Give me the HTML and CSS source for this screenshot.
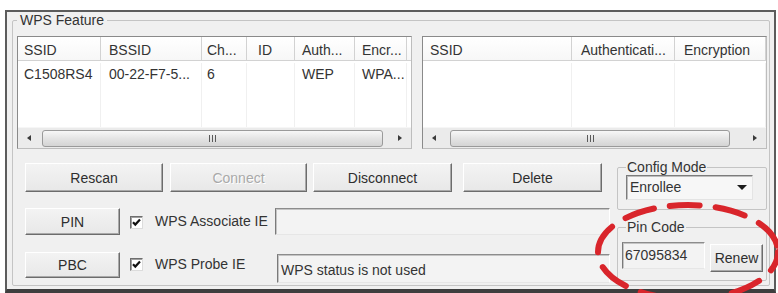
FILE: index.html
```html
<!DOCTYPE html>
<html>
<head>
<meta charset="utf-8">
<link rel="stylesheet" href="styles.css">
</head>
<body>
<div class="window">
  <fieldset class="group wps">
    <legend>WPS Feature</legend>
    <div class="lists">
      <div class="list list-left">
        <div class="lv-head">
          <div class="cell l1">SSID</div>
          <div class="cell l2">BSSID</div>
          <div class="cell l3">Ch...</div>
          <div class="cell l4">ID</div>
          <div class="cell l5">Auth...</div>
          <div class="cell l6">Encr...</div>
        </div>
        <div class="lv-body">
          <div class="lv-row">
            <div class="cell l1">C1508RS4</div>
            <div class="cell l2">00-22-F7-5...</div>
            <div class="cell l3">6</div>
            <div class="cell l4"></div>
            <div class="cell l5">WEP</div>
            <div class="cell l6">WPA...</div>
          </div>
          <div class="lv-row">
            <div class="cell l1"></div><div class="cell l2"></div><div class="cell l3"></div><div class="cell l4"></div><div class="cell l5"></div><div class="cell l6"></div>
          </div>
          <div class="lv-row">
            <div class="cell l1"></div><div class="cell l2"></div><div class="cell l3"></div><div class="cell l4"></div><div class="cell l5"></div><div class="cell l6"></div>
          </div>
        </div>
        <div class="hscroll">
          <div class="sb-btn"><span class="arrow-l"></span></div>
          <div class="thumb thumb-left"><span class="grip"></span></div>
          <div class="sb-space"></div>
          <div class="sb-btn"><span class="arrow-r"></span></div>
        </div>
      </div>
      <div class="list list-right">
        <div class="lv-head">
          <div class="cell r1">SSID</div>
          <div class="cell r2">Authenticati...</div>
          <div class="cell r3">Encryption</div>
        </div>
        <div class="lv-body">
          <div class="lv-row">
            <div class="cell r1"></div><div class="cell r2"></div><div class="cell r3"></div>
          </div>
          <div class="lv-row">
            <div class="cell r1"></div><div class="cell r2"></div><div class="cell r3"></div>
          </div>
          <div class="lv-row">
            <div class="cell r1"></div><div class="cell r2"></div><div class="cell r3"></div>
          </div>
        </div>
        <div class="hscroll">
          <div class="sb-btn"><span class="arrow-l"></span></div>
          <div class="thumb thumb-right"><span class="grip"></span></div>
          <div class="sb-space"></div>
          <div class="sb-btn"><span class="arrow-r"></span></div>
        </div>
      </div>
    </div>

    <div class="lower">
      <div class="controls">
        <div class="btn-row">
          <button class="btn b-rescan">Rescan</button>
          <button class="btn b-connect disabled">Connect</button>
          <button class="btn b-disconnect">Disconnect</button>
          <button class="btn b-delete">Delete</button>
        </div>
        <div class="opt-row pin-row">
          <button class="btn b-small b-pin">PIN</button>
          <span class="check"><svg viewBox="0 0 11 11" width="11" height="11"><path d="M2 5.2 L4.3 7.6 L9 2.6" fill="none" stroke="#111" stroke-width="2.2"/></svg></span>
          <span class="opt-label">WPS Associate IE</span>
          <div class="edit edit-assoc"></div>
        </div>
        <div class="opt-row pbc-row">
          <button class="btn b-small b-pbc">PBC</button>
          <span class="check"><svg viewBox="0 0 11 11" width="11" height="11"><path d="M2 5.2 L4.3 7.6 L9 2.6" fill="none" stroke="#111" stroke-width="2.2"/></svg></span>
          <span class="opt-label">WPS Probe IE</span>
          <div class="edit edit-status">WPS status is not used</div>
        </div>
      </div>
      <div class="side">
        <fieldset class="group config">
          <legend>Config Mode</legend>
          <div class="combo">
            <span class="combo-text">Enrollee</span>
            <span class="combo-btn"><span class="arrow-d"></span></span>
          </div>
        </fieldset>
        <fieldset class="group pincode">
          <legend>Pin Code</legend>
          <div class="pin-line">
            <div class="edit edit-pin">67095834</div>
            <button class="btn b-renew">Renew</button>
          </div>
        </fieldset>
      </div>
    </div>
  </fieldset>
</div>
<svg class="highlight" width="778" height="293" viewBox="0 0 778 293">
  <ellipse cx="688" cy="252" rx="90" ry="47" fill="none" stroke="#d9252b" stroke-width="6" stroke-dasharray="30 16" stroke-dashoffset="10" stroke-linecap="round"/>
</svg>
</body>
</html>
```
FILE: styles.css
```css
* { box-sizing: border-box; }
html, body { margin: 0; padding: 0; background: #fff; }
body {
  position: relative;
  width: 778px;
  height: 293px;
  overflow: hidden;
  font: 14px "Liberation Sans", Arial, sans-serif;
  color: #333;
}
.window {
  margin: 10px 0 0 5px;
  width: 771px;
  height: 283px;
  border: 2px solid #5c5c5c;
  border-bottom: 4px solid #3e3e3e;
  background: #f0f0f0;
}
.group {
  border: 1px solid #c4c4c4;
  border-radius: 2px;
  margin: 0;
  min-width: 0;
}
.group > legend {
  padding: 0 1px;
  line-height: 16px;
  font-size: 14px;
}
.wps {
  margin: 0 4px 0 5px;
  padding: 8px 2px 2px 4px;
}
.wps > legend { padding: 0 3px; }

/* list views */
.lists { display: flex; gap: 10px; height: 113px; }
.list {
  display: flex;
  flex-direction: column;
  background: #fff;
  border: 1px solid;
  border-color: #8a8a8a #bdbdbd #bdbdbd #8a8a8a;
  overflow: hidden;
}
.list-left { width: 395px; flex: none; }
.list-right { flex: 1; }
.lv-head {
  flex: none;
  display: flex;
  height: 24px;
  border-bottom: 1px solid #d2d2d2;
  background: linear-gradient(#ffffff, #f7f7f7);
}
.cell {
  flex: none;
  padding-left: 6px;
  white-space: nowrap;
  overflow: hidden;
}
.lv-head .cell {
  border-right: 1px solid #d2d2d2;
  line-height: 22px;
  padding-top: 2px;
}
.lv-body { flex: 1; padding-top: 2px; overflow: hidden; }
.lv-row { display: flex; height: 22px; line-height: 22px; }
.lv-body .cell { border-right: 1px solid #f0f0f0; }
.l1 { width: 83px; }
.l2 { width: 101px; padding-left: 8px; }
.l3 { width: 45px; padding-left: 5px; }
.l4 { width: 48px; padding-left: 11px; }
.l5 { width: 60px; padding-left: 7px; }
.l6 { width: 52px; padding-left: 7px; border-right: none; }
.lv-head .l6 { border-right: 1px solid #d2d2d2; }
.r1 { width: 149px; padding-left: 7px; }
.r2 { width: 103px; padding-left: 9px; }
.r3 { width: 91px; padding-left: 9px; }

/* scrollbars */
.hscroll {
  flex: none;
  height: 21px;
  display: flex;
  align-items: center;
  background: #ebebeb;
  border-top: 1px solid #f6f6f6;
}
.sb-btn {
  flex: none;
  width: 22px;
  height: 19px;
  display: flex;
  align-items: center;
  justify-content: center;
}
.sb-space { flex: 1; }
.arrow-l {
  width: 0; height: 0;
  border-top: 3px solid transparent;
  border-bottom: 3px solid transparent;
  border-right: 4px solid #3a3a3a;
}
.arrow-r {
  width: 0; height: 0;
  border-top: 3px solid transparent;
  border-bottom: 3px solid transparent;
  border-left: 4px solid #3a3a3a;
}
.thumb {
  flex: none;
  height: 17px;
  border: 1px solid #9a9a9a;
  border-radius: 3px;
  background: linear-gradient(#f7f7f7, #e4e4e4 50%, #d4d4d4);
  display: flex;
  align-items: center;
  justify-content: center;
}
.thumb-left { width: 341px; margin-left: 2px; }
.thumb-right { width: 280px; margin-left: 5px; }
.grip {
  width: 7px;
  height: 7px;
  background: repeating-linear-gradient(90deg, #5a5a5a 0 1px, transparent 1px 3px);
}

/* lower area */
.lower { display: flex; }
.controls { width: 593px; flex: none; }
.side { width: 150px; flex: none; margin-left: 7px; }

.btn {
  font: inherit;
  color: #2e2e2e;
  height: 29px;
  padding: 0;
  background: linear-gradient(#f3f3f3, #e8e8e8);
  border: 1px solid;
  border-color: #ffffff #6c6c6c #6c6c6c #ffffff;
  box-shadow: inset -1px -1px 0 #a9a9a9;
  border-radius: 0;
  display: flex;
  align-items: center;
  justify-content: center;
  flex: none;
}
.btn.disabled { color: #a9a9a9; text-shadow: 1px 1px 0 #fff; }
.btn-row { display: flex; margin-top: 14px; padding-left: 8px; }
.b-rescan { width: 138px; }
.b-connect { width: 137px; margin-left: 7px; }
.b-disconnect { width: 139px; margin-left: 6px; }
.b-delete { width: 139px; margin-left: 11px; }

.opt-row { display: flex; align-items: flex-start; padding-left: 8px; }
.pin-row { margin-top: 16px; }
.pbc-row { margin-top: 17px; }
.b-small { width: 95px; height: 27px; }
.b-pbc { height: 26px; }
.check {
  flex: none;
  width: 13px;
  height: 13px;
  margin-left: 10px;
  margin-top: 8px;
  background: #fff;
  border: 1px solid;
  border-color: #6e6e6e #dcdcdc #dcdcdc #6e6e6e;
  box-shadow: inset 1px 1px 0 #a0a0a0;
  display: flex;
  align-items: center;
  justify-content: center;
}
.check svg { display: block; }
.pbc-row .check { margin-top: 6px; }
.opt-label {
  flex: none;
  width: 120px;
  margin-left: 12px;
  line-height: 27px;
  white-space: nowrap;
}
.pbc-row .opt-label { line-height: 25px; }
.edit {
  background: #f3f3f3;
  border: 1px solid;
  border-color: #8c8c8c #ffffff #e6e6e6 #7a7a7a;
  box-shadow: inset 1px 1px 0 #c4c4c4;
  padding-left: 3px;
  white-space: nowrap;
}
.edit-assoc { flex: 1; height: 27px; }
.edit-status { flex: 1; height: 29px; margin-left: 2px; margin-top: 2px; line-height: 31px; }

/* side groups */
.config {
  margin-top: 10px;
  padding: 0 13px 9px 8px;
}
.combo {
  width: 127px;
  height: 25px;
  display: flex;
  align-items: center;
  background: #f7f7f7;
  border: 1px solid;
  border-color: #7c7c7c #e4e4e4 #e4e4e4 #7c7c7c;
  box-shadow: inset 1px 1px 0 #bdbdbd;
}
.combo-text { flex: 1; padding-left: 3px; line-height: 23px; }
.combo-btn {
  width: 18px;
  height: 21px;
  margin-right: 1px;
  display: flex;
  align-items: center;
  justify-content: center;
}
.arrow-d {
  width: 0; height: 0;
  border-left: 5px solid transparent;
  border-right: 5px solid transparent;
  border-top: 5px solid #1c1c1c;
}
.pincode {
  margin-top: 9px;
  padding: 7px 2px 8px 4px;
}
.pincode > legend { margin-left: 4px; }
.pin-line { display: flex; align-items: flex-start; }
.edit-pin { width: 83px; height: 27px; line-height: 25px; padding-left: 2px; }
.b-renew { width: 53px; height: 28px; margin-left: 5px; margin-top: 2px; }

.highlight {
  position: absolute;
  left: 0;
  top: 0;
  pointer-events: none;
}
```
